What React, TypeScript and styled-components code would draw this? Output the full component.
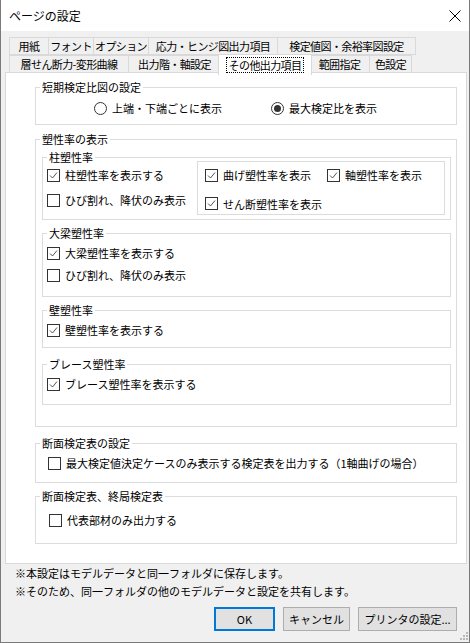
import React from "react";
import styled, { createGlobalStyle } from "styled-components";

const GlobalStyle = createGlobalStyle`
  html, body {
    margin: 0;
    padding: 0;
    background: #ffffff;
  }
  body {
    font-family: "Noto Sans CJK JP", "Noto Sans", sans-serif;
    font-size: 11px;
    color: #000;
  }
  * {
    box-sizing: border-box;
  }
`;

const Window = styled.div`
  position: relative;
  width: 470px;
  height: 643px;
  border: 1px solid #7a7a7a;
  border-top: none;
  background: #f0f0f0;
  display: flex;
  flex-direction: column;
  white-space: nowrap;
`;

const TitleBar = styled.div`
  height: 31px;
  flex: none;
  background: #fff;
  display: flex;
  align-items: center;
  justify-content: space-between;
  padding: 0 8px 0 8px;
  font-size: 12px;
`;

const Body = styled.div`
  flex: 1;
  padding: 6px 2px 0 4px;
  display: flex;
  flex-direction: column;
`;

const TabStrip = styled.div`
  margin-left: 4px;
  display: flex;
  flex-direction: column;
`;

const TabRow = styled.div`
  display: flex;
  align-items: flex-end;
  height: 18px;
`;

const Tab = styled.div<{ $w: number; $active?: boolean }>`
  position: relative;
  width: ${(p) => (p.$active ? p.$w + 4 : p.$w)}px;
  height: ${(p) => (p.$active ? 21 : 18)}px;
  margin-left: ${(p) => (p.$active ? -3 : -1)}px;
  margin-right: ${(p) => (p.$active ? -2 : 0)}px;
  margin-bottom: ${(p) => (p.$active ? -2 : 0)}px;
  z-index: ${(p) => (p.$active ? 2 : 1)};
  border: 1px solid #d9d9d9;
  border-bottom: ${(p) => (p.$active ? "none" : "1px solid #d9d9d9")};
  background: ${(p) => (p.$active ? "#fff" : "#f0f0f0")};
  display: flex;
  align-items: ${(p) => (p.$active ? "flex-start" : "center")};
  justify-content: center;
  padding-top: ${(p) => (p.$active ? 2 : 0)}px;
  line-height: 14px;
  letter-spacing: -0.6px;

  &:first-child {
    margin-left: 0;
  }
`;

const FocusText = styled.span`
  border: 1px dotted #000;
  padding: 0 2px;
  line-height: 14px;
`;

const Panel = styled.div`
  height: 492px;
  width: 462px;
  margin-top: -1px;
  background: #fff;
  border: 1px solid #d9d9d9;
  padding: 7px 9px 0 29px;
  display: flex;
  flex-direction: column;
`;

const GroupBox = styled.fieldset<{ $h: number; $mt?: number }>`
  height: ${(p) => p.$h}px;
  margin: ${(p) => p.$mt ?? 0}px 0 0 0;
  padding: 0;
  border: 1px solid #dcdcdc;
  min-width: 0;
  flex: none;
`;

const Legend = styled.legend`
  margin-left: 4px;
  padding: 0 2px;
  line-height: 14px;
  font-size: 11px;
`;

const GroupInner = styled.div<{ $pt: number; $pl: number; $pr?: number }>`
  padding: ${(p) => p.$pt}px ${(p) => p.$pr ?? 0}px 0 ${(p) => p.$pl}px;
  display: flex;
  flex-direction: column;
`;

const Stack = styled.div<{ $gap: number }>`
  display: flex;
  flex-direction: column;
  gap: ${(p) => p.$gap}px;
`;

const RadioRow = styled.div`
  display: grid;
  grid-template-columns: 177px auto;
`;

const OptionLabel = styled.label`
  display: flex;
  align-items: center;
  gap: 5px;
  height: 14px;
  line-height: 14px;
`;

const RadioCircle = styled.span<{ $on?: boolean }>`
  width: 13px;
  height: 13px;
  border-radius: 50%;
  border: 1px solid #333;
  background: #fff;
  display: flex;
  align-items: center;
  justify-content: center;
  flex: none;

  &::after {
    content: "";
    display: ${(p) => (p.$on ? "block" : "none")};
    width: 7px;
    height: 7px;
    border-radius: 50%;
    background: #333;
  }
`;

const Box = styled.span`
  width: 13px;
  height: 13px;
  border: 1px solid #333;
  background: #fff;
  flex: none;
  display: flex;
`;

const ColumnRow = styled.div`
  display: flex;
  align-items: flex-start;
`;

const LeftCol = styled.div`
  flex: 0 0 154px;
  padding: 4px 0 0 4px;
  display: flex;
  flex-direction: column;
  gap: 11px;
`;

const InnerBox = styled.div`
  margin-top: -3px;
  width: 248px;
  height: 54px;
  border: 1px solid #dcdcdc;
  padding: 6px 0 0 7px;
  display: grid;
  grid-template-columns: 122px auto;
  row-gap: 11px;
`;

const Notes = styled.div`
  padding-left: 10px;
  line-height: 18px;
`;

const ButtonRow = styled.div`
  margin-top: 7px;
  padding-right: 10px;
  display: flex;
  justify-content: flex-end;
  gap: 8px;
`;

const DlgButton = styled.button<{ $w: number; $primary?: boolean }>`
  width: ${(p) => p.$w}px;
  height: 24px;
  background: #e1e1e1;
  border: ${(p) => (p.$primary ? "2px solid #0078d7" : "1px solid #adadad")};
  font-family: inherit;
  font-size: 11px;
  color: #000;
  padding: 0;
  line-height: 14px;
`;

const Grip = styled.svg`
  position: absolute;
  right: 1px;
  bottom: 1px;
`;

const Check = ({ on, children }: { on?: boolean; children: React.ReactNode }) => (
  <OptionLabel>
    <Box>
      {on && (
        <svg width="11" height="11" viewBox="0 0 11 11">
          <path d="M2 5.5 L4.5 8 L9 2.5" fill="none" stroke="#555" strokeWidth="1" />
        </svg>
      )}
    </Box>
    <span>{children}</span>
  </OptionLabel>
);

const Radio = ({ on, children }: { on?: boolean; children: React.ReactNode }) => (
  <OptionLabel>
    <RadioCircle $on={on} />
    <span>{children}</span>
  </OptionLabel>
);

const row1 = [
  { t: "用紙", w: 40 },
  { t: "フォント", w: 46 },
  { t: "オプション", w: 56 },
  { t: "応力・ヒンジ図出力項目", w: 130 },
  { t: "検定値図・余裕率図設定", w: 139 },
];

const row2 = [
  { t: "層せん断力-変形曲線", w: 120 },
  { t: "出力階・軸設定", w: 93 },
  { t: "その他出力項目", w: 90, active: true },
  { t: "範囲指定", w: 61 },
  { t: "色設定", w: 43 },
];

export default function App() {
  return (
    <>
      <GlobalStyle />
      <Window>
        <TitleBar>
          <span>ページの設定</span>
          <svg width="12" height="12" viewBox="0 0 12 12">
            <path d="M0.5 0.5 L11.5 11.5 M11.5 0.5 L0.5 11.5" stroke="#000" strokeWidth="1" />
          </svg>
        </TitleBar>
        <Body>
          <TabStrip>
            <TabRow>
              {row1.map((t) => (
                <Tab key={t.t} $w={t.w}>
                  {t.t}
                </Tab>
              ))}
            </TabRow>
            <TabRow>
              {row2.map((t) => (
                <Tab key={t.t} $w={t.w} $active={t.active}>
                  {t.active ? <FocusText>{t.t}</FocusText> : t.t}
                </Tab>
              ))}
            </TabRow>
          </TabStrip>
          <Panel>
            <GroupBox $h={45}>
              <Legend>短期検定比図の設定</Legend>
              <GroupInner $pt={7} $pl={58}>
                <RadioRow>
                  <Radio>上端・下端ごとに表示</Radio>
                  <Radio on>最大検定比を表示</Radio>
                </RadioRow>
              </GroupInner>
            </GroupBox>

            <GroupBox $h={295} $mt={7}>
              <Legend>塑性率の表示</Legend>
              <GroupInner $pt={4} $pl={6} $pr={5}>
                <GroupBox $h={70}>
                  <Legend>柱塑性率</Legend>
                  <ColumnRow>
                    <LeftCol>
                      <Check on>柱塑性率を表示する</Check>
                      <Check>ひび割れ、降伏のみ表示</Check>
                    </LeftCol>
                    <InnerBox>
                      <Check on>曲げ塑性率を表示</Check>
                      <Check on>軸塑性率を表示</Check>
                      <Check on>せん断塑性率を表示</Check>
                    </InnerBox>
                  </ColumnRow>
                </GroupBox>

                <GroupBox $h={71} $mt={6}>
                  <Legend>大梁塑性率</Legend>
                  <GroupInner $pt={6} $pl={4}>
                    <Stack $gap={8}>
                      <Check on>大梁塑性率を表示する</Check>
                      <Check>ひび割れ、降伏のみ表示</Check>
                    </Stack>
                  </GroupInner>
                </GroupBox>

                <GroupBox $h={45} $mt={6}>
                  <Legend>壁塑性率</Legend>
                  <GroupInner $pt={6} $pl={4}>
                    <Check on>壁塑性率を表示する</Check>
                  </GroupInner>
                </GroupBox>

                <GroupBox $h={48} $mt={9}>
                  <Legend>ブレース塑性率</Legend>
                  <GroupInner $pt={6} $pl={4}>
                    <Check on>ブレース塑性率を表示する</Check>
                  </GroupInner>
                </GroupBox>
              </GroupInner>
            </GroupBox>

            <GroupBox $h={47} $mt={9}>
              <Legend>断面検定表の設定</Legend>
              <GroupInner $pt={6} $pl={12}>
                <Check>最大検定値決定ケースのみ表示する検定表を出力する（1軸曲げの場合）</Check>
              </GroupInner>
            </GroupBox>

            <GroupBox $h={55} $mt={6}>
              <Legend>断面検定表、終局検定表</Legend>
              <GroupInner $pt={10} $pl={13}>
                <Check>代表部材のみ出力する</Check>
              </GroupInner>
            </GroupBox>
          </Panel>

          <Notes>
            <div>※本設定はモデルデータと同一フォルダに保存します。</div>
            <div>※そのため、同一フォルダの他のモデルデータと設定を共有します。</div>
          </Notes>

          <ButtonRow>
            <DlgButton $w={61} $primary>
              OK
            </DlgButton>
            <DlgButton $w={67}>キャンセル</DlgButton>
            <DlgButton $w={99}>プリンタの設定...</DlgButton>
          </ButtonRow>
        </Body>
        <Grip width="10" height="10" viewBox="0 0 10 10">
          {[
            [8, 0],
            [8, 3],
            [5, 3],
            [8, 6],
            [5, 6],
            [2, 6],
          ].map(([x, y]) => (
            <rect key={`${x}-${y}`} x={x} y={y + 1} width="2" height="2" fill="#b8b8b8" />
          ))}
        </Grip>
      </Window>
    </>
  );
}
